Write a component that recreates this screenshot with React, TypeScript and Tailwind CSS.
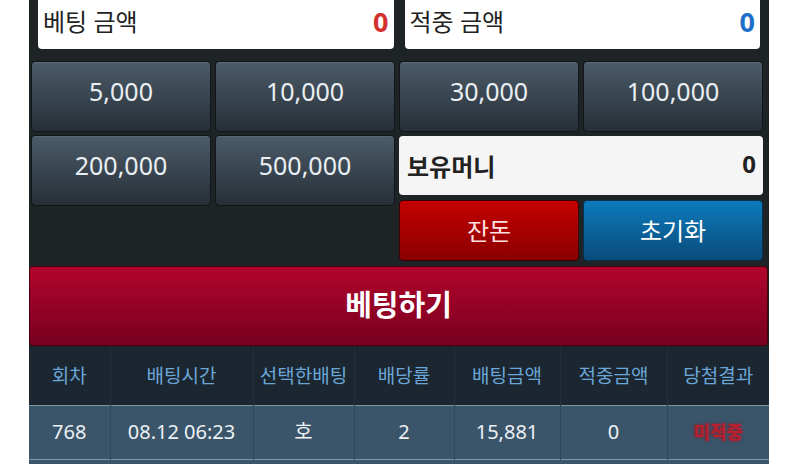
const font = { fontFamily: '"Noto Sans", "Noto Sans CJK KR", sans-serif' };

const chips = ["5,000", "10,000", "30,000", "100,000"];
const chips2 = ["200,000", "500,000"];

const headers = ["회차", "배팅시간", "선택한배팅", "배당률", "배팅금액", "적중금액", "당첨결과"];
const widths = [81, 143, 101, 100, 106, 107, 102];

function ChipButton({ label }: { label: string }) {
    return (
        <button className="h-[71px] rounded-[4px] border border-[#11161a] bg-gradient-to-b from-[#4c5c6a] to-[#262f37] pb-[9px] text-[25px] text-[#e9eef2] shadow-[inset_0_1px_0_rgba(255,255,255,0.08)]">
            {label}
        </button>
    );
}

export default function App() {
    return (
        <div className="min-h-[464px] w-[800px] overflow-hidden bg-white" style={font}>
            <div className="ml-[29px] w-[740px] bg-[#1e2326]">
                {/* amounts */}
                <div className="flex gap-[11px] px-[9px]">
                    <div className="flex h-[49px] flex-1 items-center justify-between rounded-b-[4px] bg-white px-[5px] pb-[5px]">
                        <span className="text-[24px] text-[#222]">베팅 금액</span>
                        <span className="text-[27px] font-bold text-[#d3302c]">0</span>
                    </div>
                    <div className="flex h-[49px] flex-1 items-center justify-between rounded-b-[4px] bg-white px-[5px] pb-[5px]">
                        <span className="text-[24px] text-[#222]">적중 금액</span>
                        <span className="text-[27px] font-bold text-[#1b6fc8]">0</span>
                    </div>
                </div>

                {/* chips */}
                <div className="mt-[12px] grid grid-cols-[180px_180px_180px_180px] gap-x-[4px] gap-y-[3px] pl-[2px]">
                    {chips.map((c) => (
                        <ChipButton key={c} label={c} />
                    ))}
                    {chips2.map((c) => (
                        <ChipButton key={c} label={c} />
                    ))}
                    <div className="col-span-2 flex flex-col pt-[1px]">
                        <div className="flex h-[59px] items-center justify-between rounded-[4px] bg-[#f5f5f5] pl-[8px] pr-[7px]">
                            <span className="pt-[3px] text-[24px] font-bold text-[#222]">보유머니</span>
                            <span className="pb-[4px] text-[24px] font-bold text-[#222]">0</span>
                        </div>
                        <div className="mt-[5px] grid grid-cols-2 gap-x-[4px]">
                            <button className="h-[61px] rounded-[4px] border border-[#3a0000] bg-gradient-to-b from-[#c50000] to-[#8c0000] text-[24px] text-[#ffe0e0]">
                                잔돈
                            </button>
                            <button className="h-[61px] rounded-[4px] border border-[#07314f] bg-gradient-to-b from-[#0b7bbb] to-[#0a4c7c] text-[24px] text-white">
                                초기화
                            </button>
                        </div>
                    </div>
                </div>

                {/* bet */}
                <div className="mt-[5px] pr-[1px]">
                    <button className="flex h-[80px] w-full items-center justify-center rounded-[4px] border border-[#4a0010] bg-gradient-to-b from-[#b2062b] to-[#780020] pb-[2px] text-[29px] font-bold text-white">
                        베팅하기
                    </button>
                </div>

                {/* history */}
                <table className="mt-[1px] w-[740px] table-fixed border-collapse text-center">
                    <colgroup>
                        {widths.map((w, i) => (
                            <col key={i} style={{ width: w }} />
                        ))}
                    </colgroup>
                    <thead>
                        <tr className="h-[58px] bg-[#1b2630]">
                            {headers.map((h) => (
                                <th key={h} className="border-r border-[#232f39] text-[19px] font-normal text-[#6aa6d8] last:border-r-0">
                                    {h}
                                </th>
                            ))}
                        </tr>
                    </thead>
                    <tbody>
                        <tr className="h-[54px] border-t border-b border-[#8495a2] bg-[#3a5469] text-[20px] text-[#edf1f4]">
                            <td className="border-r border-[#33495b]">768</td>
                            <td className="border-r border-[#33495b]">08.12 06:23</td>
                            <td className="border-r border-[#33495b]">호</td>
                            <td className="border-r border-[#33495b]">2</td>
                            <td className="border-r border-[#33495b]">15,881</td>
                            <td className="border-r border-[#33495b]">0</td>
                            <td className="text-[18px] font-bold text-[#b8202e] [text-shadow:0_0_3px_#a01020]">미적중</td>
                        </tr>
                        <tr className="h-[20px] bg-[#3a5469]">
                            <td colSpan={7}></td>
                        </tr>
                    </tbody>
                </table>
            </div>
        </div>
    );
}
